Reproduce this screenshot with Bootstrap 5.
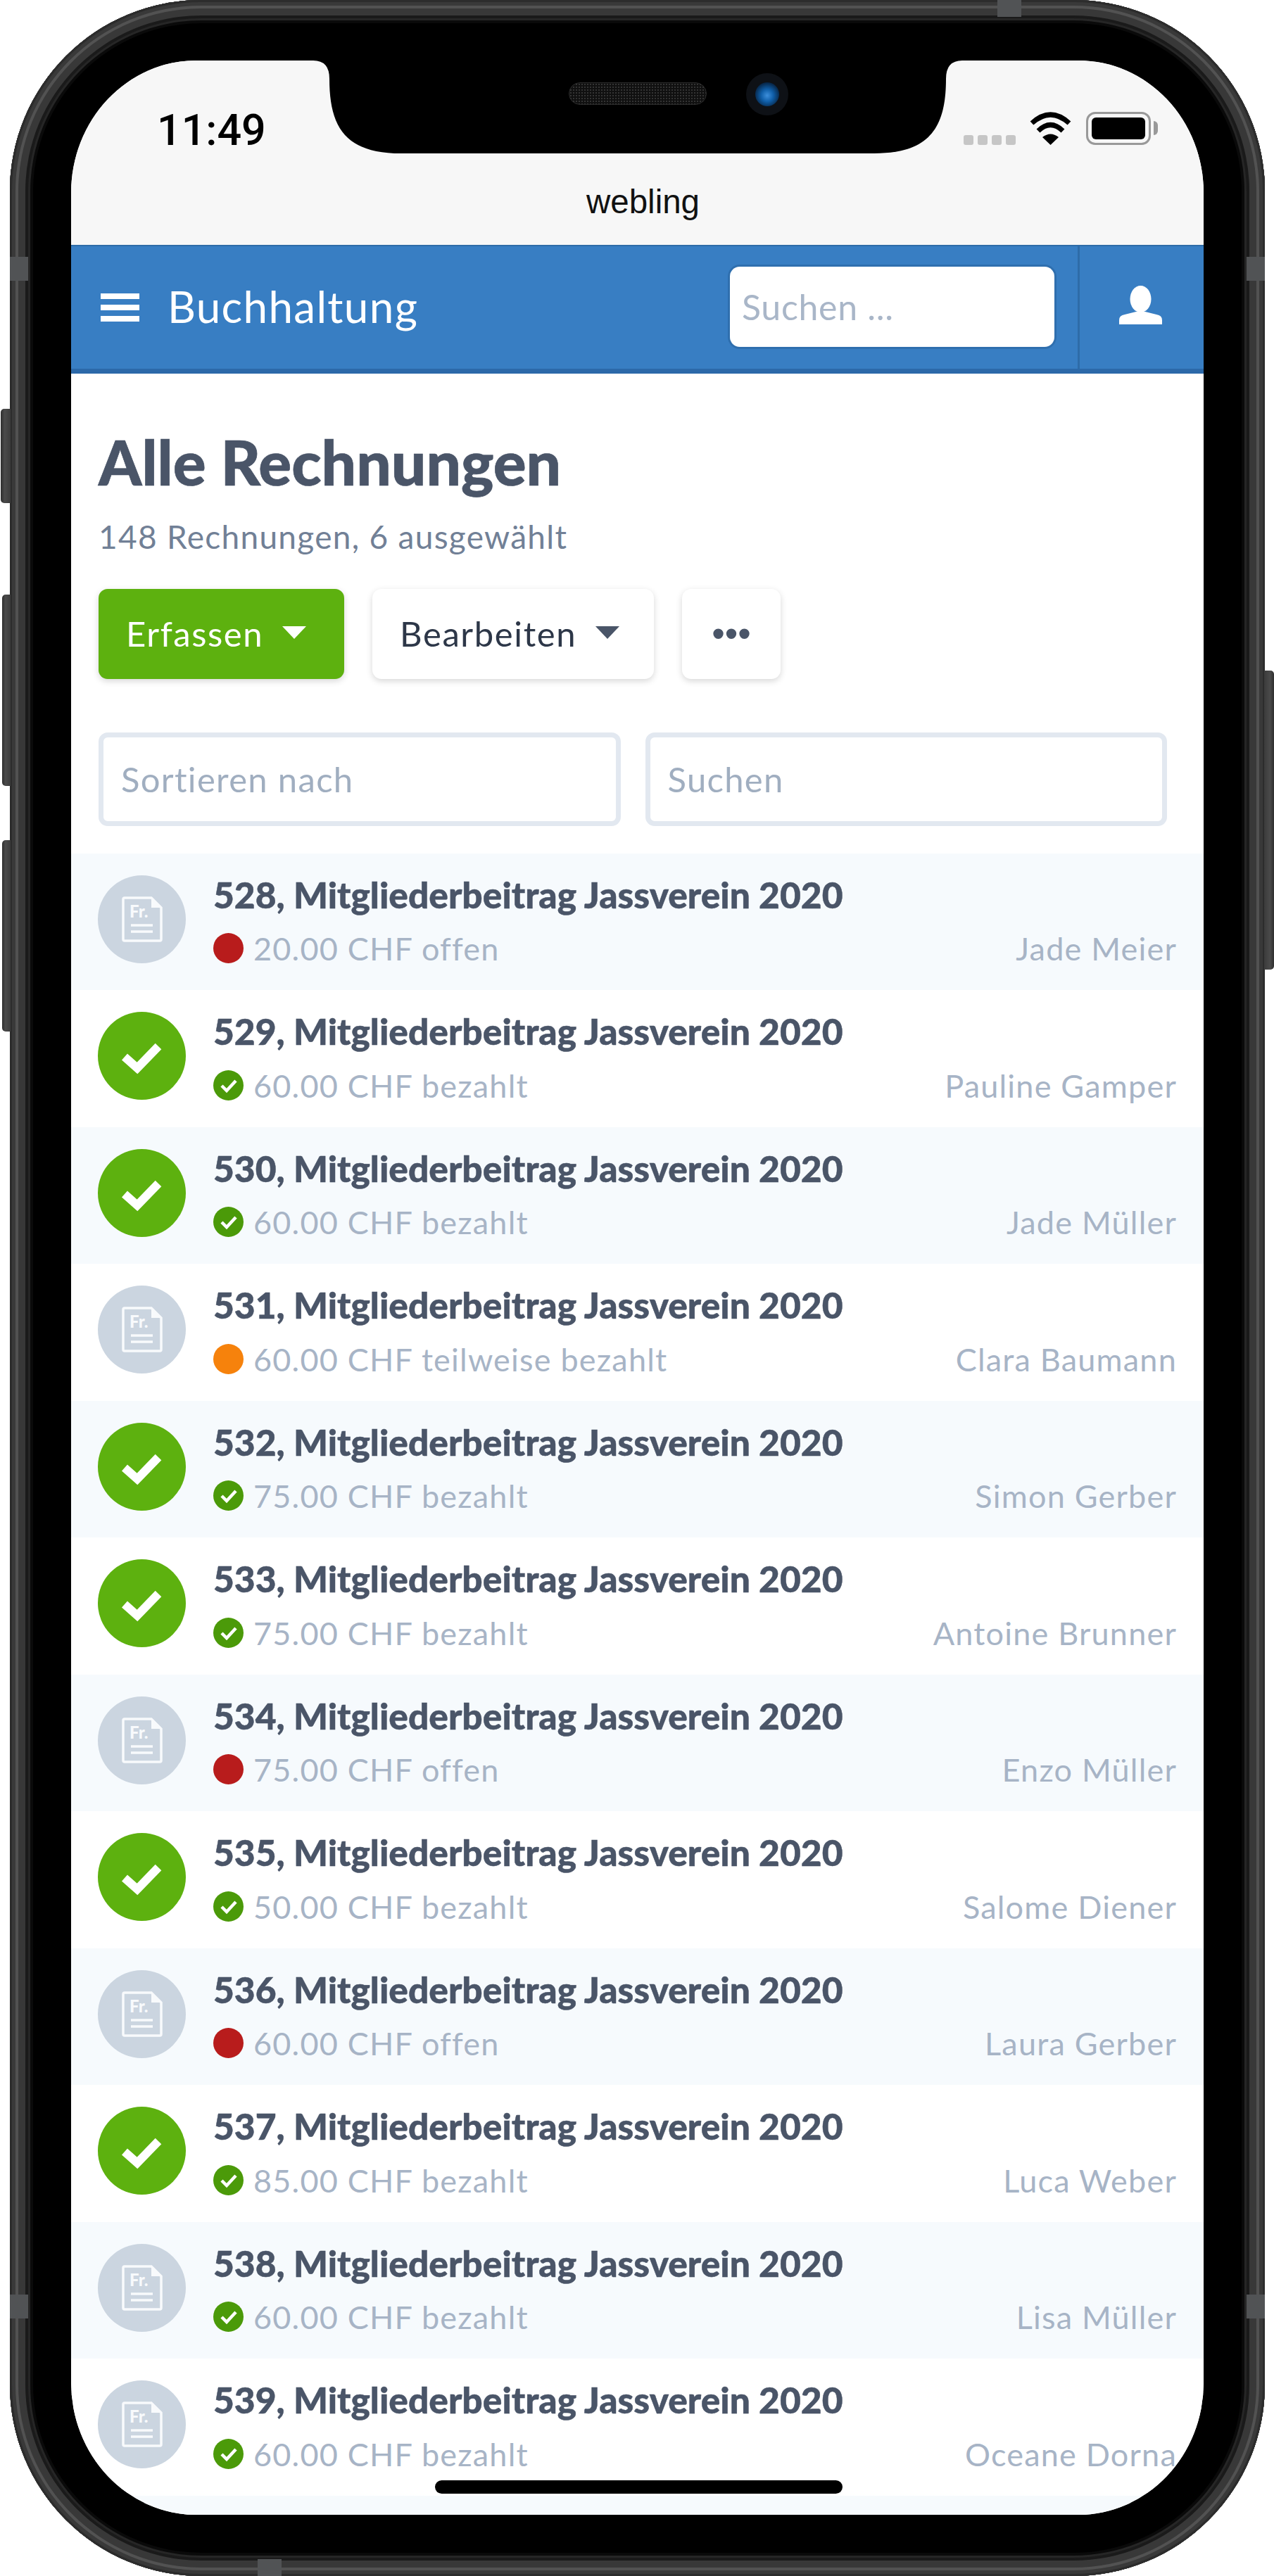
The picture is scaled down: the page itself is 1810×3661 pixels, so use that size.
<!DOCTYPE html>
<html lang="de">
<head>
<meta charset="utf-8">
<title>webling – Buchhaltung</title>
<link href="https://cdn.jsdelivr.net/npm/bootstrap@5.3.0/dist/css/bootstrap.min.css" rel="stylesheet">
<style>
html,body{margin:0;padding:0;background:#fff;}
body{width:1810px;height:3661px;overflow:hidden;font-family:"Lato","Liberation Sans",sans-serif;}
.stage{position:relative;width:1810px;height:3661px;padding:0 13px 0 14px;}
.device{height:3661px;padding:86px 87px 87px 87px;background:#000;border-radius:272px;
 box-shadow:inset 0 0 0 3px #2c2c2c,inset 0 0 0 8px #393939,inset 0 0 0 12px #525252,inset 0 0 0 22px #383838,inset 0 0 0 26px #1a1a1a,inset 0 0 0 29px #262626,inset 0 0 0 33px #0a0a0a;}
.side-key{position:absolute;background:linear-gradient(90deg,#2e2e2e,#4a4a4a 40%,#3b3b3b);border-radius:5px 0 0 5px;}
.key-a{left:1px;width:14px;top:581px;height:134px;}
.key-b{left:3px;width:12px;top:845px;height:272px;}
.key-c{left:3px;width:12px;top:1194px;height:272px;}
.key-d{right:0;width:14px;top:953px;height:425px;border-radius:0 5px 5px 0;background:linear-gradient(270deg,#2e2e2e,#4a4a4a 40%,#3b3b3b);}
.band{position:absolute;background:#515355;}
.band-t{left:1417px;top:0;width:34px;height:24px;}
.band-b{left:366px;bottom:0;width:34px;height:24px;}
.band-l{left:14px;top:365px;width:26px;height:34px;}
.band-r{right:13px;top:365px;width:26px;height:34px;}
.band-l2{left:14px;top:3261px;width:26px;height:34px;}
.band-r2{right:13px;top:3261px;width:26px;height:34px;}
.screen{height:3488px;width:1609px;background:#fff;border-radius:178px/188px;overflow:hidden;}
.notch{position:absolute;left:440px;top:80px;width:932px;height:140px;}
.speaker{position:absolute;left:808px;top:117px;width:196px;height:32px;border-radius:16px;border:1px solid #2b2b2b;
 background-color:#101010;background-image:radial-gradient(#343434 1px,transparent 1.2px);background-size:4px 4px;}
.lens-outer{position:absolute;left:1060px;top:104px;width:60px;height:60px;border-radius:50%;background:#0e1116;}
.lens{position:absolute;left:1073px;top:117px;width:34px;height:34px;border-radius:50%;background:radial-gradient(circle at 50% 55%,#3d8fdc 0,#0f5ea8 35%,#06213f 75%,#03101f 100%);}
.home-bar{position:absolute;left:618px;top:3525px;width:579px;height:19px;border-radius:10px;background:#000;}
.statusbar{height:262px;background:#f7f7f7;}
.status-row{height:144px;padding:0 0 0 122px;}
.clock{font-family:"Roboto","Liberation Sans",sans-serif;font-weight:500;font-size:61px;line-height:1;color:#000;margin-top:69px;}
.status-icons{margin-top:73px;margin-left:auto;margin-right:65px;}
.sig{width:14px;height:14px;border-radius:3px;background:#c6c6c6;margin-right:6px;margin-top:33px;}
.wifi{width:61px;height:47px;margin:0 20px 0 13px;}
.batt{width:92px;height:47px;border:3px solid #999;border-radius:13px;padding:5px;position:relative;}
.batt i{display:block;height:100%;background:#000;border-radius:6px;}
.batt-cap{width:6px;height:20px;background:#999;border-radius:0 8px 8px 0;margin:13px 0 0 4px;}
.page-name{font-family:"Liberation Sans",sans-serif;font-size:47.5px;line-height:1;color:#111;text-align:center;margin-top:33px;padding-left:16px;}
.topnav{height:183px;background:#387ec3;border-top:2px solid #2e6ca8;border-bottom:7px solid #2c69a9;padding:0;align-items:stretch;flex-wrap:nowrap;}
.burger{width:55px;margin-left:42px;gap:8px;}
.burger span{display:block;height:8px;background:#fff;}
.brand-name{color:#fff;font-size:62px;line-height:1;margin:-4px 0 0 40px;padding:0;letter-spacing:1.3px;align-self:center;}
.topsearch{width:461px;height:114px;margin:29px 33px 0 auto;border:0;border-radius:14px;box-shadow:0 0 0 3px #2f6fae;font-size:50px;padding:0 17px;color:#4a5568;letter-spacing:.7px;}
.topsearch::placeholder{color:#a9b6c8;opacity:1;}
.acct{width:179px;border-left:3px solid #2e6ca8;}
.acct svg{width:61px;height:55px;margin-left:-4px;margin-top:-8px;}
.main-head{padding:0 39px;}
.page-title{font-family:"Lato",sans-serif;font-weight:900;font-size:87.5px;color:#4a5568;line-height:1;margin:82px 0 0 0;-webkit-text-stroke:.7px #4a5568;}
.page-sub{font-size:46px;line-height:1;color:#718096;margin:39px 0 0 0;letter-spacing:1.3px;}
.bar-actions{gap:40px;margin-top:51px;}
.act-btn{height:128px;border-radius:13px;font-size:49px;line-height:1;padding:0 39px;border:0;box-shadow:0 3px 10px rgba(0,0,0,.16);letter-spacing:1.6px;display:flex;align-items:center;}
.act-btn.dropdown-toggle::after{border-top:18px solid currentColor;border-left:17px solid transparent;border-right:17px solid transparent;border-bottom:0;margin-left:27px;margin-top:-3px;}
.act-green,.act-green:hover{background:#5db10f;color:#fff;width:349px;}
.act-plain,.act-plain:hover{background:#fff;color:#2d3748;width:400px;}
.act-plain.dropdown-toggle::after{color:#4a5568;}
.act-more,.act-more:hover{background:#fff;color:#4a5568;width:140px;padding:0;justify-content:center;font-family:"Liberation Sans",sans-serif;font-size:53px;letter-spacing:0;}
.filters{gap:35px;margin-top:76px;margin-right:13px;}
.filter-input{height:133px;flex:1 1 0;border:7px solid #e2e8f0;border-radius:13px;font-size:49px;padding:0 25px;letter-spacing:1.3px;box-shadow:none;}
.filter-input::placeholder{color:#a0aec0;opacity:1;}
.bills{margin-top:39px;border-radius:0;}
.bill{height:194.5px;flex:none;border:0;border-radius:0;padding:31px 38px 0 38px;display:flex;align-items:flex-start;gap:39px;background:#fff;}
.bill:nth-child(odd){background:#f6fafd;}
.bill-tail{height:30px;padding:0;}
.bill-pic{width:125px;height:125px;flex:none;}
.bill-body{min-width:0;flex:1;}
.bill-title{font-family:"Lato",sans-serif;font-weight:900;font-size:51.5px;line-height:1;color:#4a5568;margin:2px 0 0 0;-webkit-text-stroke:.5px #4a5568;}
.bill-line{margin-top:29px;font-size:45px;line-height:1;color:#a7b4c6;letter-spacing:1.2px;}
.bill-state{gap:14px;}
.bill-state svg{width:43px;height:43px;flex:none;}
.doc-txt{font-family:"Lato",sans-serif;font-weight:900;font-size:24px;fill:#f8fafc;}
</style>
</head>
<body>
<svg width="0" height="0" class="position-absolute">
  <symbol id="pic-ok" viewBox="0 0 125 125"><circle cx="62.5" cy="62.5" r="62.5" fill="#5db10f"/><path d="M38 64 56 80 86 49" fill="none" stroke="#fff" stroke-width="12"/></symbol>
  <symbol id="pic-doc" viewBox="0 0 125 125"><circle cx="62.5" cy="62.5" r="62.5" fill="#cbd5e0"/><path d="M38 32H76L90 46V91A2 2 0 0 1 88 93H38A2 2 0 0 1 36 91V34A2 2 0 0 1 38 32Z" fill="none" stroke="#f8fafc" stroke-width="3.5"/><path d="M76 32 90 46H76Z" fill="#f8fafc"/><path d="M47 71H78M47 80H78" stroke="#f8fafc" stroke-width="3.5"/></symbol>
  <symbol id="st-ok" viewBox="0 0 43 43"><circle cx="21.5" cy="21.5" r="21.5" fill="#4b9a09"/><path d="M12 22 19 29 32 15" fill="none" stroke="#fff" stroke-width="4.5"/></symbol>
  <symbol id="st-red" viewBox="0 0 43 43"><circle cx="21.5" cy="21.5" r="21.5" fill="#b81c1c"/></symbol>
  <symbol id="st-orange" viewBox="0 0 43 43"><circle cx="21.5" cy="21.5" r="21.5" fill="#f6820c"/></symbol>
</svg>
<div class="stage">
  <span class="side-key key-a"></span><span class="side-key key-b"></span><span class="side-key key-c"></span><span class="side-key key-d"></span>
  <div class="device">
    <div class="screen">
      <div class="statusbar">
        <div class="status-row d-flex align-items-start">
          <div class="clock">11:49</div>
          <div class="status-icons d-flex align-items-start">
            <span class="sig"></span><span class="sig"></span><span class="sig"></span><span class="sig"></span>
            <svg class="wifi" viewBox="0 0 61 47"><path d="M4 16Q30.5-8 57 16" fill="none" stroke="#000" stroke-width="7"/><path d="M13 27Q30.5 10 48 27" fill="none" stroke="#000" stroke-width="7"/><path d="M19 36Q30.5 27 42 36L30.5 47Z" fill="#000"/></svg>
            <span class="batt"><i></i></span><span class="batt-cap"></span>
          </div>
        </div>
        <div class="page-name">webling</div>
      </div>
      <nav class="navbar topnav">
        <div class="burger d-flex flex-column justify-content-center"><span></span><span></span><span></span></div>
        <span class="navbar-brand brand-name">Buchhaltung</span>
        <input class="form-control topsearch" type="text" placeholder="Suchen ...">
        <div class="acct d-flex align-items-center justify-content-center">
          <svg viewBox="0 0 61 55"><ellipse cx="30.5" cy="19" rx="15" ry="19" fill="#fff"/><path d="M0 55V49Q0 42 8 41L24 37H37L53 41Q61 42 61 49V55Z" fill="#fff"/></svg>
        </div>
      </nav>
      <div class="main-head">
        <h1 class="page-title">Alle Rechnungen</h1>
        <p class="page-sub">148 Rechnungen, 6 ausgewählt</p>
        <div class="bar-actions d-flex">
          <button class="btn act-btn act-green dropdown-toggle" type="button">Erfassen</button>
          <button class="btn act-btn act-plain dropdown-toggle" type="button">Bearbeiten</button>
          <button class="btn act-btn act-more" type="button">•••</button>
        </div>
        <div class="filters d-flex">
          <input class="form-control filter-input" type="text" placeholder="Sortieren nach">
          <input class="form-control filter-input" type="text" placeholder="Suchen">
        </div>
      </div>
      <div class="list-group bills">
        <div class="list-group-item bill"><svg class="bill-pic" viewBox="0 0 125 125"><use href="#pic-doc"/><text class="doc-txt" x="45" y="60">Fr.</text></svg><div class="bill-body"><div class="bill-title">528, Mitgliederbeitrag Jassverein 2020</div><div class="bill-line d-flex justify-content-between"><span class="bill-state d-flex"><svg><use href="#st-red"/></svg>20.00 CHF offen</span><span>Jade Meier</span></div></div></div>
        <div class="list-group-item bill"><svg class="bill-pic"><use href="#pic-ok"/></svg><div class="bill-body"><div class="bill-title">529, Mitgliederbeitrag Jassverein 2020</div><div class="bill-line d-flex justify-content-between"><span class="bill-state d-flex"><svg><use href="#st-ok"/></svg>60.00 CHF bezahlt</span><span>Pauline Gamper</span></div></div></div>
        <div class="list-group-item bill"><svg class="bill-pic"><use href="#pic-ok"/></svg><div class="bill-body"><div class="bill-title">530, Mitgliederbeitrag Jassverein 2020</div><div class="bill-line d-flex justify-content-between"><span class="bill-state d-flex"><svg><use href="#st-ok"/></svg>60.00 CHF bezahlt</span><span>Jade Müller</span></div></div></div>
        <div class="list-group-item bill"><svg class="bill-pic" viewBox="0 0 125 125"><use href="#pic-doc"/><text class="doc-txt" x="45" y="60">Fr.</text></svg><div class="bill-body"><div class="bill-title">531, Mitgliederbeitrag Jassverein 2020</div><div class="bill-line d-flex justify-content-between"><span class="bill-state d-flex"><svg><use href="#st-orange"/></svg>60.00 CHF teilweise bezahlt</span><span>Clara Baumann</span></div></div></div>
        <div class="list-group-item bill"><svg class="bill-pic"><use href="#pic-ok"/></svg><div class="bill-body"><div class="bill-title">532, Mitgliederbeitrag Jassverein 2020</div><div class="bill-line d-flex justify-content-between"><span class="bill-state d-flex"><svg><use href="#st-ok"/></svg>75.00 CHF bezahlt</span><span>Simon Gerber</span></div></div></div>
        <div class="list-group-item bill"><svg class="bill-pic"><use href="#pic-ok"/></svg><div class="bill-body"><div class="bill-title">533, Mitgliederbeitrag Jassverein 2020</div><div class="bill-line d-flex justify-content-between"><span class="bill-state d-flex"><svg><use href="#st-ok"/></svg>75.00 CHF bezahlt</span><span>Antoine Brunner</span></div></div></div>
        <div class="list-group-item bill"><svg class="bill-pic" viewBox="0 0 125 125"><use href="#pic-doc"/><text class="doc-txt" x="45" y="60">Fr.</text></svg><div class="bill-body"><div class="bill-title">534, Mitgliederbeitrag Jassverein 2020</div><div class="bill-line d-flex justify-content-between"><span class="bill-state d-flex"><svg><use href="#st-red"/></svg>75.00 CHF offen</span><span>Enzo Müller</span></div></div></div>
        <div class="list-group-item bill"><svg class="bill-pic"><use href="#pic-ok"/></svg><div class="bill-body"><div class="bill-title">535, Mitgliederbeitrag Jassverein 2020</div><div class="bill-line d-flex justify-content-between"><span class="bill-state d-flex"><svg><use href="#st-ok"/></svg>50.00 CHF bezahlt</span><span>Salome Diener</span></div></div></div>
        <div class="list-group-item bill"><svg class="bill-pic" viewBox="0 0 125 125"><use href="#pic-doc"/><text class="doc-txt" x="45" y="60">Fr.</text></svg><div class="bill-body"><div class="bill-title">536, Mitgliederbeitrag Jassverein 2020</div><div class="bill-line d-flex justify-content-between"><span class="bill-state d-flex"><svg><use href="#st-red"/></svg>60.00 CHF offen</span><span>Laura Gerber</span></div></div></div>
        <div class="list-group-item bill"><svg class="bill-pic"><use href="#pic-ok"/></svg><div class="bill-body"><div class="bill-title">537, Mitgliederbeitrag Jassverein 2020</div><div class="bill-line d-flex justify-content-between"><span class="bill-state d-flex"><svg><use href="#st-ok"/></svg>85.00 CHF bezahlt</span><span>Luca Weber</span></div></div></div>
        <div class="list-group-item bill"><svg class="bill-pic" viewBox="0 0 125 125"><use href="#pic-doc"/><text class="doc-txt" x="45" y="60">Fr.</text></svg><div class="bill-body"><div class="bill-title">538, Mitgliederbeitrag Jassverein 2020</div><div class="bill-line d-flex justify-content-between"><span class="bill-state d-flex"><svg><use href="#st-ok"/></svg>60.00 CHF bezahlt</span><span>Lisa Müller</span></div></div></div>
        <div class="list-group-item bill"><svg class="bill-pic" viewBox="0 0 125 125"><use href="#pic-doc"/><text class="doc-txt" x="45" y="60">Fr.</text></svg><div class="bill-body"><div class="bill-title">539, Mitgliederbeitrag Jassverein 2020</div><div class="bill-line d-flex justify-content-between"><span class="bill-state d-flex"><svg><use href="#st-ok"/></svg>60.00 CHF bezahlt</span><span>Oceane Dorna</span></div></div></div>
        <div class="list-group-item bill bill-tail"></div>
      </div>
    </div>
  </div>
  <span class="band band-t"></span><span class="band band-b"></span><span class="band band-l"></span><span class="band band-r"></span><span class="band band-l2"></span><span class="band band-r2"></span>
  <svg class="notch" viewBox="0 0 932 140"><path d="M0 0H932V6H927Q904 6 904 32C904 100 882 138 802 138H130C50 138 28 100 28 32Q28 6 5 6H0Z" fill="#000"/></svg>
  <span class="speaker"></span><span class="lens-outer"></span><span class="lens"></span>
  <span class="home-bar"></span>
</div>
<script src="https://cdn.jsdelivr.net/npm/bootstrap@5.3.0/dist/js/bootstrap.bundle.min.js"></script>
</body>
</html>
